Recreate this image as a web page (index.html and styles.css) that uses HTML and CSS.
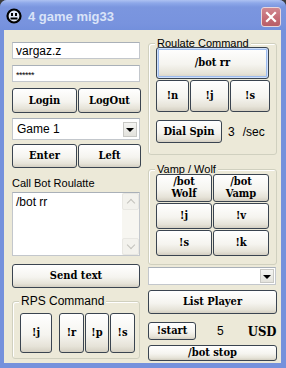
FILE: index.html
```html
<!DOCTYPE html>
<html lang="en">
<head>
    <meta charset="UTF-8">
    <title>4 game mig33</title>
    <link rel="stylesheet" href="styles.css">
</head>
<body>
    <div class="window">
        <div class="titlebar">
            <svg class="app-icon" width="16" height="16" viewBox="0 0 16 16">
                <circle cx="8" cy="8" r="6.5" fill="#dfe6f7" stroke="#000" stroke-width="2.2"/>
                <rect x="5" y="5" width="2" height="3" fill="#000"/>
                <rect x="9" y="5" width="2" height="3" fill="#000"/>
                <rect x="4.5" y="9.5" width="7" height="2" fill="#000"/>
            </svg>
            <span class="title">4 game mig33</span>
            <div class="close-btn">
                <svg width="12" height="12" viewBox="0 0 12 12">
                    <path d="M2 2 L10 10 M10 2 L2 10" stroke="#fff" stroke-width="2.2" stroke-linecap="square"/>
                </svg>
            </div>
        </div>

        <div class="client">
            <div class="col-left">
                <div class="textbox user">vargaz.z</div>
                <div class="textbox pass">******</div>
                <div class="pair">
                    <button class="btn">Login</button>
                    <button class="btn">LogOut</button>
                </div>
                <div class="combo game">
                    <span class="combo-text">Game 1</span>
                    <span class="combo-drop"><span class="arrow"></span></span>
                </div>
                <div class="pair enter">
                    <button class="btn">Enter</button>
                    <button class="btn">Left</button>
                </div>
                <div class="label call">Call Bot Roulatte</div>
                <div class="memo">
                    <div class="memo-text">/bot rr</div>
                    <div class="vscroll">
                        <span class="sb-btn"><span class="sb-arrow up"></span></span>
                        <span class="sb-track"></span>
                        <span class="sb-btn"><span class="sb-arrow down"></span></span>
                    </div>
                </div>
                <button class="btn send">Send text</button>
                <div class="group rps">
                    <div class="caption">RPS Command</div>
                    <div class="rps-row">
                        <button class="btn rps-j">!j</button>
                        <div class="rps-set">
                            <button class="btn">!r</button>
                            <button class="btn">!p</button>
                            <button class="btn">!s</button>
                        </div>
                    </div>
                </div>
            </div>

            <div class="col-right">
                <div class="group roulate">
                    <div class="caption">Roulate Command</div>
                    <button class="btn default bot-rr">/bot rr</button>
                    <div class="triple">
                        <button class="btn">!n</button>
                        <button class="btn">!j</button>
                        <button class="btn">!s</button>
                    </div>
                    <div class="spin-row">
                        <button class="btn dial">Dial Spin</button>
                        <span class="num">3</span>
                        <span class="unit">/sec</span>
                    </div>
                </div>

                <div class="group vamp">
                    <div class="caption">Vamp / Wolf</div>
                    <div class="vamp-grid">
                        <button class="btn tall">/bot<br>Wolf</button>
                        <button class="btn tall">/bot<br>Vamp</button>
                        <button class="btn">!j</button>
                        <button class="btn">!v</button>
                        <button class="btn">!s</button>
                        <button class="btn">!k</button>
                    </div>
                </div>

                <div class="combo player">
                    <span class="combo-text"></span>
                    <span class="combo-drop"><span class="arrow"></span></span>
                </div>
                <button class="btn list">List Player</button>
                <div class="start-row">
                    <button class="btn start">!start</button>
                    <span class="num five">5</span>
                    <span class="usd">USD</span>
                </div>
                <button class="btn stop">/bot stop</button>
            </div>
        </div>
    </div>
</body>
</html>
```

FILE: styles.css
```css
:root {
    --face: #ece9d8;
    --frame: #7591dc;
    --btn-border: #3a4450;
    --group-line: #d0d0bf;
}

html {
    background: #3c3c3c;
}

body {
    margin: 0;
    font-family: "Liberation Sans", Arial, sans-serif;
    font-size: 11px;
    color: #000;
}

.window {
    width: 286px;
    height: 368px;
    box-sizing: border-box;
    padding: 0 5px 5px 4px;
    background: var(--frame);
    border-radius: 7px 7px 0 0;
    display: flex;
    flex-direction: column;
}

.titlebar {
    height: 30px;
    margin: 0 -5px 0 -4px;
    padding: 0 5px 0 6px;
    border-radius: 7px 7px 0 0;
    background: linear-gradient(#aec2f2 0, #8ea8e9 3px, #7b96df 7px, #7893de 80%, #7390dc 100%);
    display: flex;
    align-items: center;
    flex-shrink: 0;
}

.app-icon {
    margin-top: 2px;
}

.title {
    margin-left: 6px;
    margin-top: 2px;
    font-family: "Liberation Sans", Arial, sans-serif;
    font-weight: bold;
    font-size: 13px;
    color: #d9e3f8;
    flex: 1;
}

.close-btn {
    width: 18px;
    height: 18px;
    margin-top: 3px;
    border: 1px solid #e9d6da;
    border-radius: 3px;
    background: linear-gradient(#d08890, #c46a74 60%, #b85e68);
    display: flex;
    align-items: center;
    justify-content: center;
}

.client {
    flex: 1;
    background: var(--face);
    display: flex;
    gap: 8px;
    padding-left: 8px;
}

.col-left {
    width: 128px;
    display: flex;
    flex-direction: column;
}

.col-right {
    width: 129px;
    display: flex;
    flex-direction: column;
}

/* inputs */
.textbox {
    height: 17px;
    box-sizing: border-box;
    background: #fff;
    border: 1px solid #c3c7cc;
    border-top-color: #a9b0b8;
    padding: 1px 3px;
    font-size: 12px;
    line-height: 14px;
}

.user {
    margin-top: 12px;
}

.pass {
    margin-top: 6px;
    font-size: 9px;
    line-height: 16px;
    letter-spacing: -0.5px;
}

.combo {
    box-sizing: border-box;
    background: #fff;
    border: 1px solid #c3c7cc;
    border-top-color: #a9b0b8;
    display: flex;
    align-items: center;
    padding: 2px;
}

.combo-text {
    flex: 1;
    padding-left: 2px;
    font-size: 12px;
}

.combo-drop {
    width: 14px;
    height: 15px;
    background: linear-gradient(#f4f4f2, #e3e2dc);
    border: 1px solid #c8c8c4;
    box-sizing: border-box;
    display: flex;
    align-items: center;
    justify-content: center;
}

.arrow {
    width: 0;
    height: 0;
    border-left: 4px solid transparent;
    border-right: 4px solid transparent;
    border-top: 4px solid #000;
    margin-top: 1px;
}

.game {
    height: 22px;
    margin-top: 5px;
}

.player {
    height: 18px;
    margin-top: 2px;
    width: 128px;
    padding: 1px;
}

.player .combo-drop {
    height: 14px;
}

/* buttons */
.btn {
    box-sizing: border-box;
    margin: 0;
    padding: 0;
    border: 1px solid var(--btn-border);
    border-radius: 3px;
    background: linear-gradient(#ffffff, #f5f4ef 55%, #e6e3d8 85%, #d4cfc2);
    font-family: "DejaVu Serif Condensed", "DejaVu Serif", serif;
    font-stretch: condensed;
    font-weight: bold;
    font-size: 11px;
    line-height: 12px;
    color: #000;
}

.btn.default {
    box-shadow: inset 0 0 0 1px #cfe0fb, inset 0 0 0 2px #9dbbee;
}

.pair {
    display: grid;
    grid-template-columns: 65px 63px;
    gap: 0 1px;
    margin-top: 6px;
    height: 25px;
}

.pair.enter {
    margin-top: 4px;
    height: 24px;
}

.label {
    line-height: 13px;
}

.call {
    margin-top: 9px;
}

.memo {
    margin-top: 2px;
    height: 64px;
    box-sizing: border-box;
    border: 1px solid #c3c7cc;
    border-top-color: #a9b0b8;
    background: #fff;
    display: flex;
}

.memo-text {
    flex: 1;
    padding: 2px 3px;
    font-size: 12px;
}

.vscroll {
    width: 17px;
    display: flex;
    flex-direction: column;
    background: #f7f6f1;
}

.sb-btn {
    height: 17px;
    box-sizing: border-box;
    border: 1px solid #e8e7e2;
    border-radius: 2px;
    background: #f3f2ed;
    display: flex;
    align-items: center;
    justify-content: center;
}

.sb-track {
    flex: 1;
}

.sb-arrow {
    width: 5px;
    height: 5px;
    border-left: 1px solid #c3c2bd;
    border-top: 1px solid #c3c2bd;
}

.sb-arrow.up {
    transform: rotate(45deg);
    margin-top: 3px;
}

.sb-arrow.down {
    transform: rotate(225deg);
    margin-top: -3px;
}

.send {
    margin-top: 8px;
    height: 24px;
}

/* group boxes */
.group {
    border: 1px solid var(--group-line);
    border-radius: 3px;
    box-shadow: inset 1px 1px #fff;
}

.caption {
    display: table;
    margin: -7px 0 0 6px;
    padding: 0 2px;
    background: var(--face);
    font-size: 11px;
    line-height: 13px;
}

.rps {
    margin-top: 13px;
    height: 58px;
    box-sizing: border-box;
    width: 128px;
}

.rps .caption {
    font-size: 12px;
}

.rps-row {
    display: flex;
    gap: 7px;
    padding-left: 7px;
    margin-top: 5px;
}

.rps-row .btn {
    height: 40px;
}

.rps-j {
    width: 32px;
}

.rps-set {
    display: grid;
    grid-template-columns: 25px 24px 25px;
    gap: 1px;
}

.roulate {
    margin-top: 13px;
    height: 112px;
    box-sizing: border-box;
    padding: 0 7px;
}

.roulate .caption {
    margin-left: -1px;
}

.bot-rr {
    margin-top: -3px;
    width: 113px;
    height: 32px;
}

.triple {
    display: grid;
    grid-template-columns: 33px 39px 40px;
    gap: 1px;
    margin-top: 1px;
}

.triple .btn {
    height: 32px;
}

.spin-row {
    display: flex;
    align-items: center;
    margin-top: 8px;
}

.dial {
    width: 66px;
    height: 23px;
}

.num {
    font-size: 12px;
}

.spin-row .num {
    margin-left: 6px;
}

.unit {
    margin-left: 8px;
    font-size: 12px;
}

.vamp {
    margin-top: 14px;
    height: 96px;
    box-sizing: border-box;
    padding: 0 7px;
}

.vamp .caption {
    margin-left: -1px;
}

.vamp-grid {
    display: grid;
    grid-template-columns: 56px 56px;
    grid-template-rows: 28px 26px 26px;
    gap: 1px;
    margin-top: -2px;
}

.list {
    margin-top: 5px;
    height: 24px;
}

.start-row {
    display: flex;
    align-items: center;
    margin-top: 8px;
    height: 18px;
}

.start {
    width: 48px;
    height: 18px;
}

.five {
    margin-left: 21px;
}

.usd {
    margin-left: 24px;
    font-family: "DejaVu Serif Condensed", "DejaVu Serif", serif;
    font-stretch: condensed;
    font-weight: bold;
    font-size: 13px;
}

.stop {
    margin-top: 5px;
    height: 16px;
    line-height: 12px;
}
```
